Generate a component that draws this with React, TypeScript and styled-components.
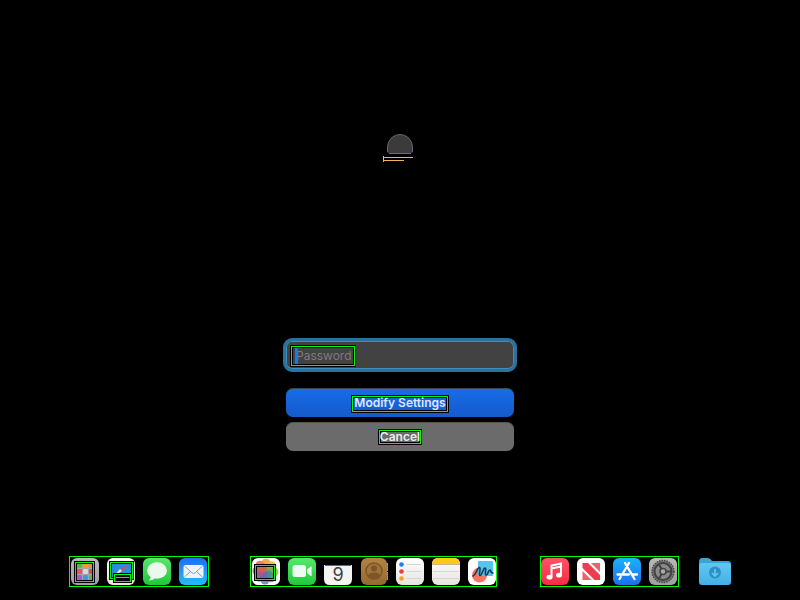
import React from "react";
import styled, { createGlobalStyle, css } from "styled-components";

const GlobalStyle = createGlobalStyle`
  * { box-sizing: border-box; }
  body { margin: 0; background: #000; }
`;

const Page = styled.main`
  min-height: 100vh;
  display: flex;
  flex-direction: column;
  align-items: center;
  padding: 134px 16px 13px;
  background: #000;
  font-family: Inter, "Liberation Sans", sans-serif;
  font-size: 12px;
  line-height: 16px;
`;

const Avatar = styled.svg`
  display: block;
  width: 34px;
  height: 28px;
`;

const Form = styled.form`
  width: 100%;
  max-width: 234px;
  margin-top: 176px;
  display: flex;
  flex-direction: column;
`;

const Field = styled.label`
  position: relative;
  display: block;
`;

const PasswordInput = styled.input`
  display: block;
  width: 100%;
  height: 34px;
  padding: 0 10px;
  border: 3px solid #2a719e;
  border-radius: 9px;
  background: #424242;
  box-shadow: inset 0 0 0 1px #3d8fbd;
  color: #fff;
  font: inherit;
  outline: none;
  &::placeholder { color: #7c7c7c; opacity: 1; }
`;

const frame = css`
  border: 1px solid #00ff00;
  box-shadow: 0 0 0 1px #000, inset 0 0 0 1px #000;
`;

const FieldFrame = styled.span`
  ${frame}
  position: absolute;
  left: 8px;
  top: 8px;
  width: 64px;
  height: 20px;
  pointer-events: none;
`;

const Caret = styled.span`
  position: absolute;
  left: 12px;
  top: 10px;
  width: 3px;
  height: 16px;
  border-radius: 1px;
  background: #087cff;
`;

const Actions = styled.div`
  display: flex;
  flex-direction: column;
  gap: 5px;
  margin: 16px 3px 0;
`;

const ActionButton = styled.button<{ $primary?: boolean }>`
  display: flex;
  align-items: flex-start;
  justify-content: center;
  height: 29px;
  padding: 7px 0 0;
  border: 0;
  border-top: 1px solid ${(p) => (p.$primary ? "#3b4a60" : "#555")};
  border-radius: 7px;
  background: ${(p) => (p.$primary ? "linear-gradient(#186be9, #155bcb)" : "#6b6b6b")};
  color: ${(p) => (p.$primary ? "#dfe9fb" : "#ececec")};
  font: inherit;
  font-weight: 600;
`;

const ButtonText = styled.span<{ $tight?: boolean }>`
  ${frame}
  padding: ${(p) => (p.$tight ? "0" : "0 1px 2px")};
  line-height: 12px;
  white-space: nowrap;
`;

const Dock = styled.nav`
  display: flex;
  align-items: center;
  justify-content: center;
  margin-top: auto;
`;

const DockGroup = styled.div`
  ${frame}
  display: flex;
  gap: 8px;
  padding: 1px;
  & + & { margin-left: 41px; padding-right: 0; }
  & + & + & { margin-left: 43px; padding: 1px 1px 1px 0; }
`;

const AppButton = styled.button`
  display: block;
  padding: 0;
  border: 0;
  background: none;
`;

const FolderButton = styled(AppButton)`
  margin-left: 20px;
`;

const Glyph = styled.svg`
  display: block;
  width: 28px;
  height: 27px;
`;

const FolderGlyph = styled.svg`
  display: block;
  width: 32px;
  height: 27px;
`;

function Tile({ fill }: { fill: string }) {
  return <rect width="28" height="27" rx="6" fill={fill} />;
}

function Mark({ x, y, w, h }: { x: number; y: number; w: number; h: number }) {
  return (
    <g fill="none" shapeRendering="crispEdges">
      <rect x={x + 0.5} y={y + 0.5} width={w - 1} height={h - 1} stroke="#000" strokeWidth="3" />
      <rect x={x + 0.5} y={y + 0.5} width={w - 1} height={h - 1} stroke="#00ff00" />
    </g>
  );
}

function Gradients() {
  const list: [string, string, string][] = [
    ["silver", "#b9b9b9", "#9f9f9f"],
    ["green", "#59e66a", "#20c83c"],
    ["blue", "#1e6ff3", "#22bdfb"],
    ["store", "#1bb2fa", "#1c6fee"],
    ["paper", "#ffffff", "#e5e3df"],
    ["red", "#fb5368", "#fa2b42"],
    ["brown", "#b18445", "#95692f"],
    ["folder", "#60c7f1", "#43b0e6"],
  ];
  return (
    <svg width="0" height="0" aria-hidden="true" display="block">
      <defs>
        {list.map(([id, top, bottom]) => (
          <linearGradient key={id} id={id} x1="0" y1="0" x2="0" y2="1">
            <stop stopColor={top} />
            <stop offset="1" stopColor={bottom} />
          </linearGradient>
        ))}
      </defs>
    </svg>
  );
}

const launchColors = ["#54bd43", "#f49a28", "#f18b1e", "#ed5262", "#d8d8d8", "#e54747", "#a75acb", "#389bea", "#55b94f"];
const petals = ["#f7a32d", "#e8c43a", "#8fbf4f", "#45a694", "#5b86cc", "#8e67b7", "#cf5e8d", "#ee704f"];

const apps = {
  Launchpad: (
    <>
      <Tile fill="url(#silver)" />
      <rect x="5" y="4" width="19" height="20" fill="#a6a6a6" />
      {launchColors.map((c, i) => (
        <rect key={i} x={6 + (i % 3) * 6} y={5 + Math.floor(i / 3) * 6} width="5" height="5" rx="1" fill={c} />
      ))}
      <Mark x={4} y={4} w={19} h={20} />
    </>
  ),
  Safari: (
    <>
      <Tile fill="url(#paper)" />
      <rect x="3" y="4" width="22" height="17" fill="#2b8ae2" />
      <path d="M22 6 13 11 15 13Z" fill="#f04438" />
      <path d="M13 11 15 13 7 18Z" fill="#f2f2f2" />
      <Mark x={3} y={4} w={23} h={17} />
      <rect x="7" y="16" width="17" height="8" fill="#000" />
      <Mark x={7} y={16} w={17} h={8} />
      <path d="M9 19.5H22" stroke="#00ff00" />
    </>
  ),
  Messages: (
    <>
      <Tile fill="url(#green)" />
      <ellipse cx="14" cy="12.5" rx="10" ry="8.3" fill="#edf8ed" />
      <path d="M8 17Q8 21 5.5 22.5Q10 22.5 12 20Z" fill="#edf8ed" />
    </>
  ),
  Mail: (
    <>
      <Tile fill="url(#blue)" />
      <rect x="4.5" y="7" width="20" height="13" rx="2" fill="#edf3f7" />
      <path d="m5.5 8 7.4 6.8q1.6 1.4 3.2 0L23.5 8M5.5 19l6-5.5m12 5.5-6-5.5" fill="none" stroke="#8d9eaa" />
    </>
  ),
  Photos: (
    <>
      <Tile fill="#fff" />
      {petals.map((c, i) => (
        <rect key={c} x="9.5" y="0.5" width="9" height="13" rx="4.5" fill={c} opacity="0.9" transform={`rotate(${i * 45} 13.5 13.5)`} />
      ))}
      <rect x="4" y="8" width="18" height="13" fill="#243c60" opacity="0.18" />
      <Mark x={3} y={7} w={20} h={15} />
    </>
  ),
  FaceTime: (
    <>
      <Tile fill="url(#green)" />
      <rect x="4.5" y="7" width="13.5" height="12" rx="2.5" fill="#effaf0" />
      <path d="m19 11.5 3.8-3q.8-.5.8.5v8.4q0 1-.8.5L19 15Z" fill="#effaf0" />
    </>
  ),
  Calendar: (
    <>
      <path d="M0 7H28V21Q28 27 22 27H6Q0 27 0 21Z" fill="#f4f4f3" />
      <path d="M1 7.5H27" stroke="#e43539" />
      <text x="14" y="23" textAnchor="middle" fontFamily="Inter, sans-serif" fontSize="18" fill="#414141">9</text>
    </>
  ),
  Contacts: (
    <>
      <path d="M27 5V9" stroke="#9a9a9a" strokeWidth="3" />
      <path d="M27 9V13" stroke="#4ba9e6" strokeWidth="3" />
      <path d="M27 14V18" stroke="#e8793f" strokeWidth="3" />
      <path d="M27 18V22" stroke="#68b85b" strokeWidth="3" />
      <rect x="1" width="26" height="27" rx="6" fill="url(#brown)" />
      <circle cx="14" cy="13" r="8" fill="#a0733a" stroke="#7c5629" strokeWidth="1.5" />
      <circle cx="14" cy="10.5" r="3" fill="#7c5629" />
      <path d="M8 18q0-3.5 6-3.5t6 3.5q-6 5-12 0Z" fill="#7c5629" />
    </>
  ),
  Reminders: (
    <>
      <Tile fill="url(#paper)" />
      <path d="M10.5 6.5H25M10.5 13.5H25M10.5 20.5H25" stroke="#d5d5d5" />
      <circle cx="5.5" cy="6.5" r="2.3" fill="#1d7ef4" />
      <circle cx="5.5" cy="13.5" r="2.3" fill="#ee3e42" />
      <circle cx="5.5" cy="20.5" r="2.3" fill="#f79f22" />
    </>
  ),
  Notes: (
    <>
      <Tile fill="url(#paper)" />
      <path d="M0 6Q0 0 6 0H22Q28 0 28 6Z" fill="#ffc91c" />
      <path d="M0 6.5H28" stroke="#c9b98a" />
      <path d="M1 13.5H27M1 20.5H27" stroke="#d8d5ce" />
    </>
  ),
  Freeform: (
    <>
      <Tile fill="#fff" />
      <circle cx="11.5" cy="17" r="7.5" fill="#f67560" />
      <rect x="10" y="3" width="15" height="15" rx="1" fill="#55c5ee" />
      <path d="M5 18C8 17 9.500 9 11.500 9.500c2 .5-1.500 7.500.5 8 2 .5 3-7.500 5-7.500 2 0-1 6.500 1 7 2 .5 2-5 4-5 1.500 0 0 3.500 3 3" fill="none" stroke="#19354f" strokeWidth="1.6" strokeLinecap="round" />
    </>
  ),
  Music: (
    <>
      <Tile fill="url(#red)" />
      <path d="M10.5 19V7.5L20 5.5V17M10.5 10.5 20 8.5" fill="none" stroke="#fff" strokeWidth="2" />
      <ellipse cx="8.5" cy="19.2" rx="3" ry="2.4" fill="#fff" />
      <ellipse cx="18" cy="17.2" rx="3" ry="2.4" fill="#fff" />
    </>
  ),
  News: (
    <>
      <Tile fill="#fff" />
      <path d="M5.5 5H11L23 17V22H17.5L5.5 10Z" fill="#ef3b50" />
      <path d="M14 5H23V14ZM5.500 13 14.500 22H5.500Z" fill="#f0606e" />
    </>
  ),
  "App Store": (
    <>
      <Tile fill="url(#store)" />
      <path d="m12 5 9.5 16M16 5 9.5 16M7.7 19 6.5 21M4.5 16.5H16M19.5 16.5H24" fill="none" stroke="#fff" strokeWidth="2.3" strokeLinecap="round" />
    </>
  ),
  "System Settings": (
    <>
      <Tile fill="url(#silver)" />
      <circle cx="14" cy="13.5" r="11" fill="#777" stroke="#484848" strokeWidth="1.5" strokeDasharray="1.5 1" />
      <circle cx="14" cy="13.5" r="8.5" fill="#8a8a8a" stroke="#424242" strokeWidth="2" />
      <circle cx="14" cy="13.5" r="3" fill="#aaa" stroke="#424242" strokeWidth="1.5" />
      <path d="M17 13.5H22M12.5 11 10 6.5M12.5 16 10 20.5" stroke="#424242" strokeWidth="2" />
    </>
  ),
};

const groups: (keyof typeof apps)[][] = [
  ["Launchpad", "Safari", "Messages", "Mail"],
  ["Photos", "FaceTime", "Calendar", "Contacts", "Reminders", "Notes", "Freeform"],
  ["Music", "News", "App Store", "System Settings"],
];

export default function App() {
  return (
    <>
      <GlobalStyle />
      <Page>
        <Avatar viewBox="0 0 34 28" aria-hidden="true">
          <path d="M4.5 19V13a12.5 12.5 0 0 1 25 0v6Z" fill="#3b3b3b" />
          <path d="M4.5 18V13a12.5 12.5 0 0 1 25 0v5" fill="none" stroke="#656565" />
          <path d="M6 19.5H28" stroke="#7d6d55" />
          <path d="M0 23.5H30M0 26.5H21M.5 22V28" stroke="#f1b457" />
        </Avatar>
        <Form onSubmit={(event) => event.preventDefault()}>
          <Field>
            <PasswordInput type="password" placeholder="Password" aria-label="Password" />
            <Caret />
            <FieldFrame />
          </Field>
          <Actions>
            <ActionButton type="submit" $primary>
              <ButtonText>Modify Settings</ButtonText>
            </ActionButton>
            <ActionButton type="button">
              <ButtonText $tight>Cancel</ButtonText>
            </ActionButton>
          </Actions>
        </Form>
        <Dock aria-label="Dock">
          {groups.map((group) => (
            <DockGroup key={group[0]}>
              {group.map((name) => (
                <AppButton key={name} type="button" aria-label={name}>
                  <Glyph viewBox="0 0 28 27" aria-hidden="true">{apps[name]}</Glyph>
                </AppButton>
              ))}
            </DockGroup>
          ))}
          <FolderButton type="button" aria-label="Downloads">
            <FolderGlyph viewBox="0 0 32 27" aria-hidden="true">
              <path d="M0 4Q0 0 3 0H9Q11 0 13 3H29Q32 3 32 6V13H0Z" fill="#3aa5d5" />
              <rect y="5" width="32" height="22" rx="3" fill="url(#folder)" />
              <circle cx="16" cy="14.5" r="6" fill="#2d91c8" />
              <path d="M16 11V18M13 15l3 3 3-3" fill="none" stroke="#62c6ef" strokeWidth="1.7" />
            </FolderGlyph>
          </FolderButton>
        </Dock>
        <Gradients />
      </Page>
    </>
  );
}
